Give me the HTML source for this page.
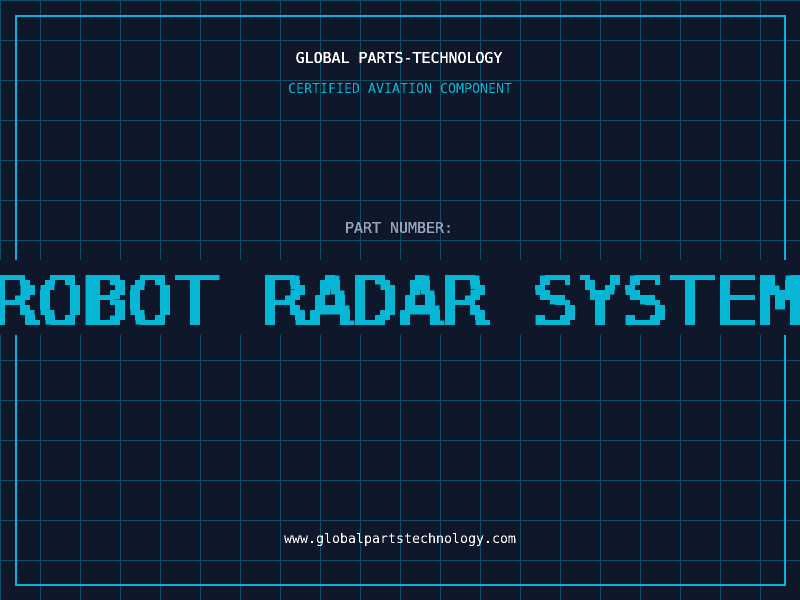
<!DOCTYPE html>
<html>
<head>
<meta charset="utf-8">
<style>
html,body{margin:0;padding:0;width:800px;height:600px;overflow:hidden;background:#0f172a}
svg{position:absolute;left:0;top:0;display:block}
text{font-family:"DejaVu Sans Mono",monospace}
</style>
</head>
<body>
<svg width="800" height="600" viewBox="0 0 800 600" xmlns="http://www.w3.org/2000/svg">
<defs>
<pattern id="g" width="40" height="40" patternUnits="userSpaceOnUse">
<rect x="0" y="0" width="40" height="1" fill="#0e4f66"/>
<rect x="0" y="0" width="1" height="40" fill="#0e4f66"/>
</pattern>
<filter id="px" filterUnits="userSpaceOnUse" x="0" y="260" width="800" height="75" color-interpolation-filters="sRGB">
<feMorphology in="SourceAlpha" operator="dilate" radius="1 0" result="d"/>
<feFlood x="2" y="262" width="1" height="1" flood-color="#fff"/>
<feComposite x="0" y="260" width="5" height="5"/>
<feTile result="t"/>
<feComposite in="d" in2="t" operator="in"/>
<feComponentTransfer><feFuncA type="discrete" tableValues="0 1"/></feComponentTransfer>
<feMorphology operator="dilate" radius="2" result="m"/>
<feFlood flood-color="#06b6d4"/>
<feComposite in2="m" operator="in"/>
</filter>
<filter id="th" filterUnits="userSpaceOnUse" x="0" y="0" width="800" height="600" color-interpolation-filters="sRGB">
<feComponentTransfer><feFuncA type="discrete" tableValues="0 1"/></feComponentTransfer>
</filter>
</defs>
<rect width="800" height="600" fill="#0f172a"/>
<rect width="800" height="600" fill="url(#g)"/>
<rect x="16" y="16" width="769" height="569" fill="none" stroke="#06b6d4" stroke-width="2"/>
<rect x="0" y="260" width="800" height="75" fill="#0f172a"/>
<g filter="url(#th)">
<text x="399" y="63" text-anchor="middle" font-size="14.95" stroke="#fff" stroke-width=".35" fill="#fff">GLOBAL PARTS-TECHNOLOGY</text>
<text x="400" y="93" text-anchor="middle" font-size="13.29" fill="#06b6d4">CERTIFIED AVIATION COMPONENT</text>
<text x="399" y="233" text-anchor="middle" font-size="14.95" stroke="#94a3b8" stroke-width=".35" fill="#94a3b8">PART NUMBER:</text>
<text x="400" y="543" text-anchor="middle" font-size="13.29" fill="#fff">www.globalpartstechnology.com</text>
</g>
<g filter="url(#px)">
<text transform="translate(-7,325) scale(1.09,1)" font-size="68.6" stroke="#06b6d4" stroke-width=".6" fill="#06b6d4">ROBOT RADAR SYSTEM</text>
</g>
</svg>
</body>
</html>
